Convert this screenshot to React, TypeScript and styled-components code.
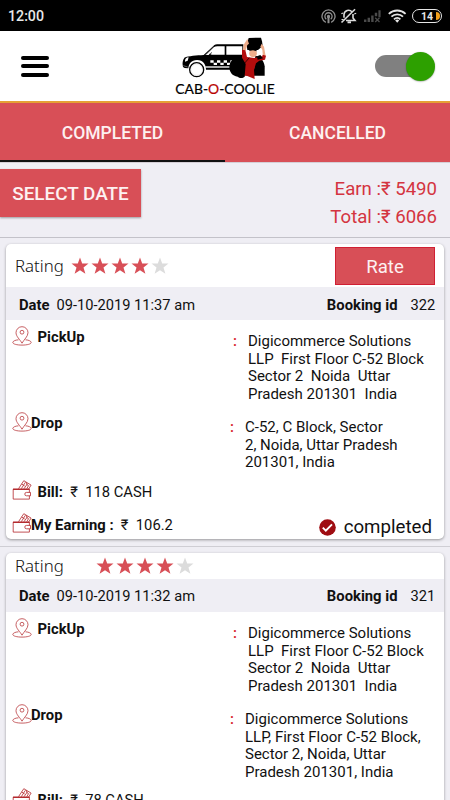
import React from "react";
import styled, { createGlobalStyle } from "styled-components";

const RED = "#d84f57";
const PANEL = "#efeef4";

const GlobalStyle = createGlobalStyle`
  * { box-sizing: border-box; }
  html, body { margin: 0; padding: 0; height: 100%; overflow: hidden; }
  body { font-family: Roboto, "Liberation Sans", sans-serif; background: ${PANEL}; color: #111; }
  button { font: inherit; border: 0; padding: 0; }
  svg { display: block; flex: none; }
`;

const Screen = styled.div`
  width: 450px;
  height: 800px;
  overflow: hidden;
  display: flex;
  flex-direction: column;
  background: ${PANEL};
`;

const StatusBar = styled.div`
  flex: none;
  height: 31px;
  background: #000;
  color: #e8e8e8;
  display: flex;
  align-items: center;
  justify-content: space-between;
  padding: 1px 8px 0 8px;
`;

const Clock = styled.span`
  font-size: 14.2px;
  line-height: 18px;
  font-weight: 500;
`;

const StatusIcons = styled.div`
  display: flex;
  align-items: center;
`;

const Header = styled.header`
  flex: none;
  height: 72px;
  background: #fff;
  border-bottom: 2px solid #e5a136;
  display: grid;
  grid-template-columns: 1fr 110px 1fr;
  align-items: center;
`;

const MenuButton = styled.button`
  width: 28px;
  height: 21px;
  margin-left: 21px;
  background: none;
  display: flex;
  flex-direction: column;
  justify-content: space-between;
`;

const MenuLine = styled.span`
  width: 28px;
  height: 4px;
  border-radius: 2px;
  background: #000;
`;

const Brand = styled.div`
  display: flex;
  flex-direction: column;
  align-items: center;
  height: 70px;
  padding-top: 5.7px;
`;

const BrandName = styled.div`
  font-family: Lato, "Liberation Sans", sans-serif;
  font-size: 13.9px;
  line-height: 17px;
  font-weight: 400;
  white-space: nowrap;
  color: #000;
  -webkit-text-stroke: 0.2px currentColor;
`;

const BrandAccent = styled.span`
  color: #b80000;
`;

const Toggle = styled.button`
  justify-self: end;
  margin-right: 15px;
  width: 60px;
  height: 22px;
  border-radius: 11px;
  background: linear-gradient(#808080, #808080) left / 52px 22px no-repeat;
  display: flex;
  align-items: center;
  justify-content: flex-end;
`;

const ToggleThumb = styled.span`
  flex: none;
  width: 29px;
  height: 29px;
  border-radius: 50%;
  background: #2da000;
  box-shadow: 0 0.5px 1.5px rgba(0, 0, 0, 0.4);
`;

const Tabs = styled.nav`
  flex: none;
  height: 59px;
  display: grid;
  grid-template-columns: 1fr 1fr;
  background: ${RED};
`;

const Tab = styled.button<{ $active?: boolean }>`
  background: none;
  color: #fdf1f1;
  font-size: 17.5px;
  font-weight: 500;
  padding-top: 3px;
  border-bottom: 2px solid ${(p) => (p.$active ? "#111" : RED)};
`;

const Filters = styled.section`
  flex: none;
  height: 76px;
  display: flex;
  justify-content: space-between;
  align-items: flex-start;
  padding: 7px 13px 0 0;
  border-top: 1px solid #d5cfd6;
  border-bottom: 1px solid #c3c2c9;
`;

const DateButton = styled.button`
  width: 141px;
  height: 48px;
  margin-top: -1px;
  background: ${RED};
  color: #fdf1f1;
  font-size: 18.9px;
  font-weight: 500;
  padding-top: 1px;
  box-shadow: 0 1px 2px rgba(0, 0, 0, 0.35);
`;

const Totals = styled.div`
  color: #d43440;
  font-size: 18.6px;
  line-height: 28px;
  text-align: right;
  padding-top: 5px;
`;

const Slot = styled.div`
  flex: none;
  padding: 6px 6px 7px;
  border-bottom: 1px solid #cfced4;
`;

const Card = styled.article`
  background: #fff;
  border-radius: 5px;
  box-shadow: 0 1px 3px rgba(0, 0, 0, 0.38);
`;

const RatingRow = styled.div<{ $tall: boolean }>`
  height: ${(p) => (p.$tall ? 43 : 26)}px;
  display: flex;
  align-items: center;
  padding: 0 9px 0 9px;
`;

const RatingLabel = styled.span<{ $wide: boolean }>`
  font-family: "Noto Sans", Lato, sans-serif;
  font-weight: 300;
  font-size: 16.8px;
  line-height: 22px;
  width: ${(p) => (p.$wide ? 80 : 55)}px;
`;

const Stars = styled.div`
  flex: 1;
  display: flex;
`;

const RateButton = styled.button`
  width: 100px;
  height: 38px;
  margin-top: 1px;
  padding-top: 1px;
  background: ${RED};
  border: 1px solid #d01f33;
  color: #fdf1f1;
  font-size: 18.6px;
`;

const BookingBar = styled.div`
  height: 33px;
  background: ${PANEL};
  display: flex;
  align-items: center;
  font-size: 14.65px;
  line-height: 18px;
  padding: 2px 9px 0 13px;
`;

const BookingDate = styled.span`
  margin-left: 7px;
  flex: 1;
`;

const BookingId = styled.span`
  width: 24.5px;
  margin-left: 13px;
`;

const Strong = styled.span`
  font-weight: 700;
  font-size: 14.8px;
`;

const StopRow = styled.div<{ $height: number; $shift: number }>`
  height: ${(p) => p.$height}px;
  display: grid;
  grid-template-columns: 19px 1fr ${(p) => 213 + p.$shift}px;
  padding-left: 6px;
  font-size: 15px;
  line-height: 17.5px;
`;

const IconBox = styled.span`
  padding-top: 6px;
`;

const StopName = styled.span<{ $indent: boolean }>`
  padding: 9.2px 0 0 ${(p) => (p.$indent ? 6.5 : 0)}px;
  font-weight: 700;
  font-size: 14.8px;
`;

const Stop = styled.div`
  display: grid;
  grid-template-columns: 15px 1fr;
  padding-top: 13.2px;
`;

const Colon = styled.span`
  color: #d8222e;
  font-weight: 500;
`;

const Address = styled.span`
  white-space: pre;
  font-size: 15px;
`;

const MoneyRow = styled.div<{ $last: boolean }>`
  height: ${(p) => (p.$last ? 28.6 : 33.4)}px;
  display: flex;
  align-items: flex-start;
  padding: 0 12px 0 6px;
  font-size: 14.75px;
  line-height: 18px;
`;

const WalletBox = styled.span`
  width: 19px;
  padding-top: 3px;
`;

const MoneyText = styled.span<{ $indent: boolean }>`
  flex: 1;
  padding: 6px 0 0 ${(p) => (p.$indent ? 6.5 : 0)}px;
  white-space: pre;
`;

const Completed = styled.span`
  display: flex;
  align-items: center;
  gap: 7.5px;
  font-size: 18.7px;
  line-height: 22px;
  padding-top: 6px;
`;

function CastIcon() {
  return (
    <svg width="15" height="15" viewBox="0 0 15 15" fill="none" stroke="#8f8f8f" strokeWidth="1.3">
      <path d="M4.8 13.3a6.5 6.5 0 1 1 5.4 0" />
      <path d="M5.3 10.2a3.6 3.6 0 1 1 4.4 0" />
      <circle cx="7.5" cy="7.5" r="1" fill="#8f8f8f" />
      <path d="M7.5 8v6.2" strokeWidth="2" />
    </svg>
  );
}

function MutedBellIcon() {
  return (
    <svg width="21" height="16" viewBox="-5 0 21 16" fill="none" stroke="#dcdcdc" strokeWidth="1.6">
      <path d="M3 9.800V6.500A4.500 4.500 0 0 1 11 4M12 6v4l2 2.500H5M6.500 14.400h3.500" />
      <path d="M0.500 14.500 14 1.200" />
      <path d="M.5 11.500h2M13.200 6l2-.7M.4 5.800l1.500-.8" strokeWidth="1.2" />
    </svg>
  );
}

function SignalIcon() {
  return (
    <svg width="25" height="16" viewBox="-7 0 25 16" fill="#4b4b4b">
      <path d="M0 11.500h2.400V14H0zM3.600 9.800H6V14H3.600zM7.200 7.600h2.400V14H7.200zM10.800 4.800h2.400v3.400h-2.400zM14.400 2.200h2.200v7h-2.200z" />
      <path d="m11.200 9.800 4.300 4.200M15.500 9.800 11.200 14" stroke="#4b4b4b" strokeWidth="1.3" />
    </svg>
  );
}

function WifiIcon() {
  return (
    <svg width="25" height="16" viewBox="-6 0 25 16" fill="none" stroke="#e6e6e6" strokeWidth="1.8">
      <path d="M.8 5.800a12.300 12.300 0 0 1 16.800 0M3.400 8.700a8.400 8.400 0 0 1 11.600 0M6 11.300a4.600 4.600 0 0 1 6.400 0" />
      <path d="m9.200 14.800-2-2.300a3 3 0 0 1 4 0z" fill="#e6e6e6" stroke="none" />
    </svg>
  );
}

const Battery = styled.span`
  width: 30px;
  height: 14px;
  margin-left: 5px;
  border: 1.5px solid #e6e6e6;
  border-radius: 7px;
  display: flex;
  align-items: center;
  justify-content: flex-end;
  gap: 3px;
  padding-right: 1px;
  font-size: 10.5px;
  line-height: 11px;
  font-weight: 700;
`;

const BatteryLevel = styled.span`
  width: 4px;
  height: 8px;
  border-radius: 0 4px 4px 0;
  background: #f2a01c;
`;

function TaxiLogo() {
  return (
    <svg width="87" height="43.5" viewBox="52 20 261 130.5">
      <path
        d="M54 104c-1-14 4-19 5-22 12-5 38-7 58-8l29-27c4-4 9-5 16-5h74v76H124c0-15-8-29-27-29-17 0-25 12-26 25l-11-1-5-3z"
        fill="#000"
      />
      <path d="M123 74l24-23c3-2 7-3 11-3h22v25h-40l-3-5-5 6zM185 48h48v25h-48z" fill="#fff" />
      <path d="M121 74l27-26M137 74l4-9" stroke="#444" strokeWidth="2" />
      <path d="M61 94c-1-8 4-13 11-13l-3 10z" fill="#fff" />
      <path d="M56 106l13 4" stroke="#999" strokeWidth="2" />
      <path d="M122 110h76" stroke="#fff" strokeWidth="4" />
      <circle cx="96" cy="118" r="21" fill="#fff" stroke="#000" strokeWidth="4" />
      <circle cx="96" cy="118" r="17" fill="none" stroke="#ccc" strokeWidth="1" />
      <path
        d="M137 90h10v7h-10zM157 90h10v7h-10zM177 90h10v7h-10zM197 90h6v7h-6zM147 97h10v7h-10zM167 97h10v7h-10zM187 97h10v7h-10z"
        fill="#fff"
      />
      <path d="M194 110c1-17 13-28 24-30l16-4 14 26-8 37c-6 6-16 5-21 0-16-2-25-14-25-29z" fill="#000" />
      <path d="M252 23l37-1 3 11 2 14-14 12h-32l-2-16z" fill="#000" />
      <path d="M272 76c17 3 26 16 28 32v28h-34z" fill="#000" />
      <path d="M248 26l-11 17-3 18 8 2 6-19 5-4zM291 40l7 9 5 29-8 2-2-22-6-9z" fill="#efad8b" />
      <path d="M232 58l10 2 5 20 21 3 16-3 9-2 1-5 10 3-3 12-17 3-10 8-6 20 2 27-22-9-8-1 3-35-11-19z" fill="#b20d0d" />
      <path d="M279 88l16-4-8-10-10 4z" fill="#000" />
      <circle cx="265" cy="69" r="11.500" fill="#efad8b" />
      <path d="M252 62l7-7 14 1 4 7-12-3z" fill="#000" />
      <path d="M254 82l-18 21" stroke="#000" strokeWidth="2" />
    </svg>
  );
}

function Star({ on }: { on: boolean }) {
  return (
    <svg width="20" height="18" viewBox="0 0 20 18">
      <path
        d="M10 .4l2.200 6 6.300.2-5 3.900 1.900 6.300L10 13.200l-5.400 3.600 1.900-6.300-5-3.900 6.300-.2z"
        fill={on ? RED : "#dcdcdc"}
      />
    </svg>
  );
}

function PinIcon() {
  return (
    <svg width="20" height="20" viewBox="0 0 20 20" fill="none" stroke="#b9383c" strokeWidth=".8">
      <path d="M10 17.200C8 13.500 4 10.500 4 6.700a6 6 0 0 1 12 0c0 3.800-4 6.800-6 10.500z" />
      <circle cx="10" cy="6.200" r="1.900" />
      <path d="M6.500 13.800C3 14 .8 15.300.8 16.500c0 1.500 4 2.600 9.200 2.600s9.200-1.100 9.200-2.600c0-1.200-2.200-2.500-5.700-2.700" />
    </svg>
  );
}

function WalletIcon() {
  return (
    <svg width="20" height="20" viewBox="0 0 20 20" fill="none" stroke="#b3262b" strokeWidth=".8">
      <path d="M17.400 12.500V9.200H1.200v9.900h16.200v-3.300" />
      <path d="M1 9.300h16.500" strokeWidth="1.300" />
      <path d="M14.500 12.400h4v3.400h-4a1.700 1.700 0 0 1 0-3.400z" />
      <path d="M6.500 8.700l5.300-8 7.300 4.400-2.500 4M9.300 8.700l4-6.300M12 8.700l3.500-5M14.800 8.700l2-3.500M9.700 4l3 2M14 2.100l1.500 3.400" />
    </svg>
  );
}

function CheckIcon() {
  return (
    <svg width="17" height="17" viewBox="0 0 17 17">
      <circle cx="8.500" cy="8.500" r="8.300" fill="#9f0d12" />
      <path d="M3.800 8.700l3 3 6.200-6.400" fill="none" stroke="#fff" strokeWidth="1.900" />
    </svg>
  );
}

interface Booking {
  id: string;
  date: string;
  rateable: boolean;
  pickup: string;
  drop: string;
  dropHeight: number;
  bill: string;
  earning?: string;
}

const bookings: Booking[] = [
  {
    id: "322",
    date: "09-10-2019 11:37 am",
    rateable: true,
    pickup: "Digicommerce Solutions\nLLP  First Floor C-52 Block\nSector 2  Noida  Uttar\nPradesh 201301  India",
    drop: "C-52, C Block, Sector\n2, Noida, Uttar Pradesh\n201301, India",
    dropHeight: 71,
    bill: "118 CASH",
    earning: "106.2",
  },
  {
    id: "321",
    date: "09-10-2019 11:32 am",
    rateable: false,
    pickup: "Digicommerce Solutions\nLLP  First Floor C-52 Block\nSector 2  Noida  Uttar\nPradesh 201301  India",
    drop: "Digicommerce Solutions\nLLP, First Floor C-52 Block,\nSector 2, Noida, Uttar\nPradesh 201301, India",
    dropHeight: 87.5,
    bill: "78 CASH",
  },
];

function BookingCard({ booking }: { booking: Booking }) {
  return (
    <Slot>
      <Card>
        <RatingRow $tall={booking.rateable}>
          <RatingLabel $wide={!booking.rateable}>Rating</RatingLabel>
          <Stars>
            {[1, 2, 3, 4, 5].map((n) => (
              <Star key={n} on={n <= 4} />
            ))}
          </Stars>
          {booking.rateable && <RateButton>Rate</RateButton>}
        </RatingRow>
        <BookingBar>
          <Strong>Date</Strong>
          <BookingDate>{booking.date}</BookingDate>
          <Strong>Booking id</Strong>
          <BookingId>{booking.id}</BookingId>
        </BookingBar>
        <StopRow $height={86} $shift={-2}>
          <IconBox><PinIcon /></IconBox>
          <StopName $indent>PickUp</StopName>
          <Stop>
            <Colon>:</Colon>
            <Address>{booking.pickup}</Address>
          </Stop>
        </StopRow>
        <StopRow $height={booking.dropHeight} $shift={1}>
          <IconBox><PinIcon /></IconBox>
          <StopName $indent={false}>Drop</StopName>
          <Stop>
            <Colon>:</Colon>
            <Address>{booking.drop}</Address>
          </Stop>
        </StopRow>
        <MoneyRow $last={false}>
          <WalletBox><WalletIcon /></WalletBox>
          <MoneyText $indent><Strong>Bill:</Strong>{"  ₹  " + booking.bill}</MoneyText>
        </MoneyRow>
        {booking.earning && (
          <MoneyRow $last>
            <WalletBox><WalletIcon /></WalletBox>
            <MoneyText $indent={false}><Strong>My Earning :</Strong>{"  ₹  " + booking.earning}</MoneyText>
            <Completed><CheckIcon />completed</Completed>
          </MoneyRow>
        )}
      </Card>
    </Slot>
  );
}

export default function App() {
  return (
    <>
      <GlobalStyle />
      <Screen>
        <StatusBar>
          <Clock>12:00</Clock>
          <StatusIcons>
            <CastIcon />
            <MutedBellIcon />
            <SignalIcon />
            <WifiIcon />
            <Battery>14<BatteryLevel /></Battery>
          </StatusIcons>
        </StatusBar>
        <Header>
          <MenuButton aria-label="Menu">
            <MenuLine />
            <MenuLine />
            <MenuLine />
          </MenuButton>
          <Brand>
            <TaxiLogo />
            <BrandName>CAB-<BrandAccent>O</BrandAccent>-COOLIE</BrandName>
          </Brand>
          <Toggle aria-label="Availability">
            <ToggleThumb />
          </Toggle>
        </Header>
        <Tabs>
          <Tab $active>COMPLETED</Tab>
          <Tab>CANCELLED</Tab>
        </Tabs>
        <Filters>
          <DateButton>SELECT DATE</DateButton>
          <Totals>
            <div>Earn :₹ 5490</div>
            <div>Total :₹ 6066</div>
          </Totals>
        </Filters>
        {bookings.map((b) => (
          <BookingCard key={b.id} booking={b} />
        ))}
      </Screen>
    </>
  );
}
